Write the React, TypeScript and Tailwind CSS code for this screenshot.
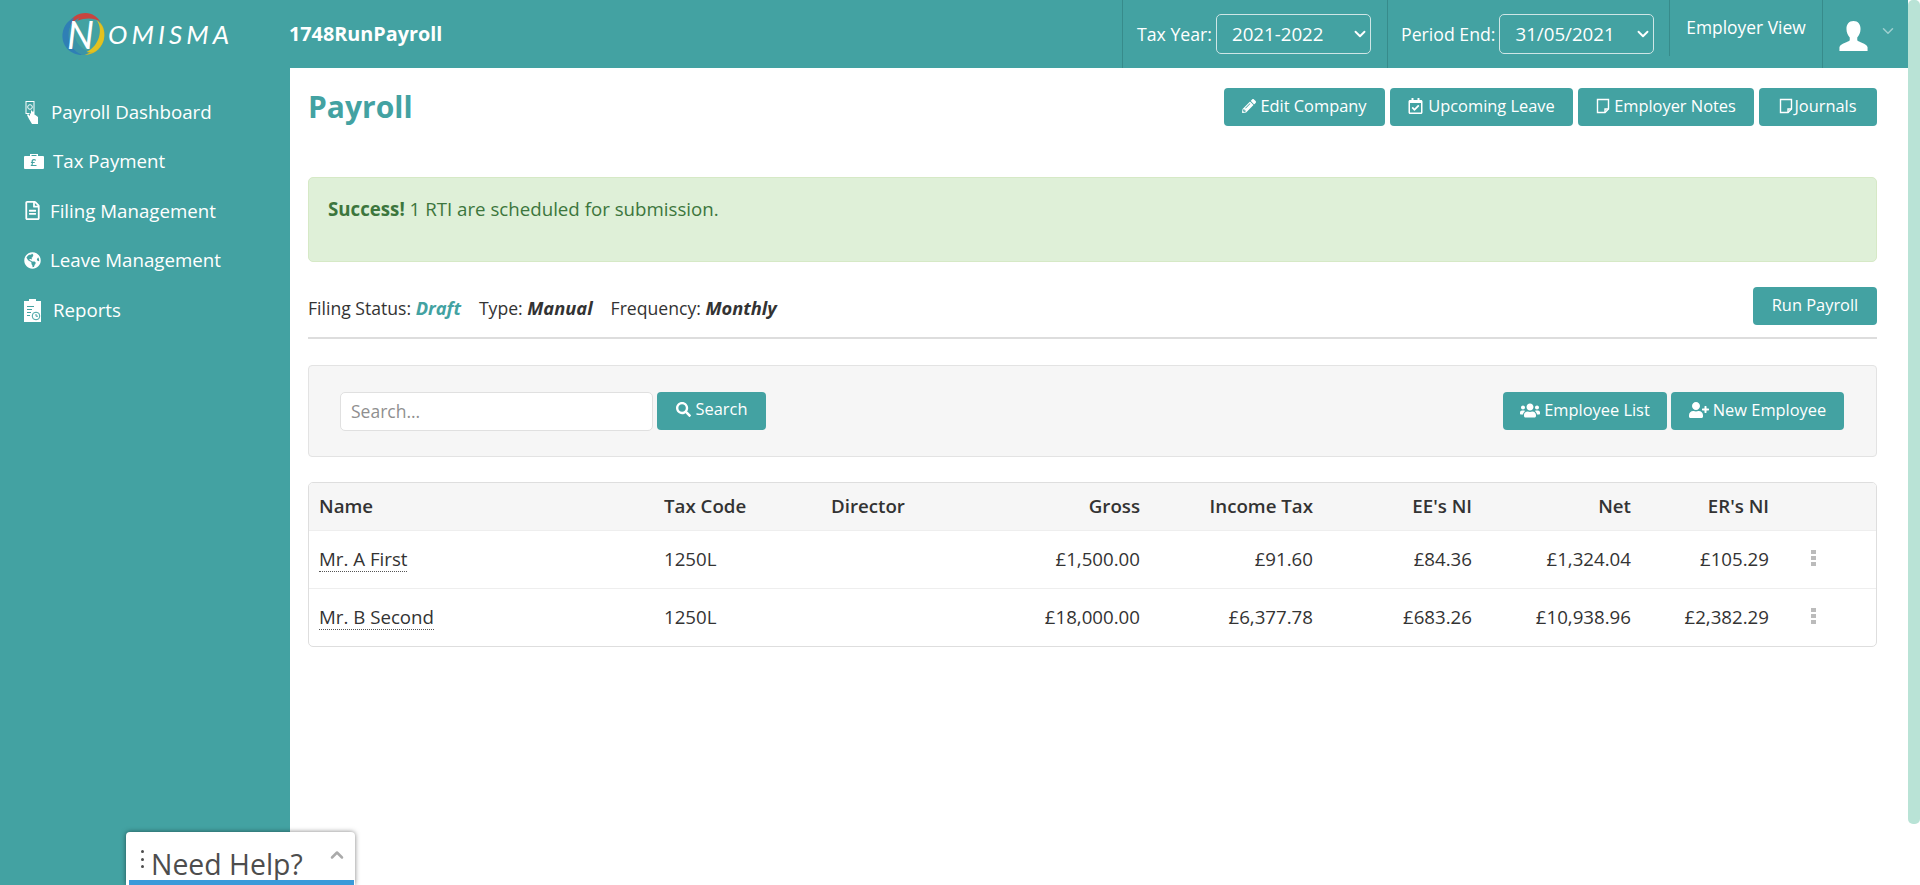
import { FaGlobeAmericas, FaPencilAlt, FaRegCalendarCheck, FaRegFileAlt, FaSearch, FaUserPlus, FaUsers } from "react-icons/fa";
import { FiChevronDown, FiChevronUp } from "react-icons/fi";

const btn = "flex h-[38px] items-center justify-center rounded-[4px] bg-[#43a2a2] pb-[2px] text-[16.4px] text-white";

const rows = [
  { name: "Mr. A First", code: "1250L", gross: "£1,500.00", tax: "£91.60", ee: "£84.36", net: "£1,324.04", er: "£105.29" },
  { name: "Mr. B Second", code: "1250L", gross: "£18,000.00", tax: "£6,377.78", ee: "£683.26", net: "£10,938.96", er: "£2,382.29" },
];

function Logo() {
  return (
    <div className="relative -ml-[1px] flex h-[46px] w-[172px] items-center">
      <svg viewBox="0 0 46 46" className="h-[46px] w-[47px] shrink-0" fill="none" aria-hidden="true">
        <path d="M6 17C9 6 18 2 25 2c7 0 12 4 15 9-6-5-22-6-34 6z" fill="#c8453f" />
        <path d="M22 44C9 44 1 34 2 23 3 14 9 8 14 7 7 14 6 34 22 44z" fill="#2f7fb5" />
        <path d="M22 44c-9-3-14-12-14-20C8 15 13 9 19 7 10 16 12 36 30 41c-2 2-5 3-8 3z" fill="#3a93a8" />
        <path d="M39 11c5 5 6 12 4 19-3 9-11 14-19 14 11-3 20-18 15-33z" fill="#d8b824" />
        <path d="M36 9c7 9 3 26-10 32 3 1 7 0 9-1 7-5 10-13 8-20-1-5-4-9-7-11z" fill="#e3c21f" />
      </svg>
      <span className="absolute left-[7px] top-[2px] font-['Lato',sans-serif] text-[38px] italic leading-[42px] text-white">N</span>
      <span className="ml-[1px] font-['Lato',sans-serif] text-[26px] italic leading-none tracking-[4.1px] text-white">OMISMA</span>
    </div>
  );
}

function HandIcon() {
  return (
    <svg viewBox="0 0 16 24" className="h-[24px] w-[16px]" aria-hidden="true">
      <path d="M1.500 1h9v13h-1V2h-7v11h3v1h-4z" fill="#fff" />
      <circle cx="6" cy="7" r="2.300" fill="none" stroke="#fff" strokeWidth="1" />
      <path d="M6 9v4l1 1V10l2 2 1-1v3l4 3v7H8l-3-5-2-4 1-1 2 2z" fill="#fff" />
    </svg>
  );
}

function BriefcaseIcon() {
  return (
    <svg viewBox="0 0 20 16" className="h-[16px] w-[20px]" aria-hidden="true">
      <path d="M6 3V1h8v2h5a1 1 0 0 1 1 1v11a1 1 0 0 1-1 1H1a1 1 0 0 1-1-1V4a1 1 0 0 1 1-1zm1.500 0h5V2h-5z" fill="#fff" fillRule="evenodd" />
      <path d="M12.500 13H6.800v-.9c1-.4 1.200-1.100 1-2.100H6.900v-.9h.7c-.3-1.900.8-3 2.300-3 .9 0 1.700.3 2.200.8l-.6.900c-.4-.4-.9-.6-1.500-.6-.9 0-1.300.7-1.100 1.900h1.800V10H8.900c.1.800 0 1.400-.4 1.900h4z" fill="#43a2a2" />
    </svg>
  );
}

function ReportIcon() {
  return (
    <svg viewBox="0 0 18 24" className="h-[24px] w-[18px]" aria-hidden="true">
      <path d="M0 3h5V1h7v2h5v21H0z" fill="#fff" />
      <path d="M3 8h7v1H3zM3 11h5v1H3zM3 14h4v1H3zM3 17h3v1H3z" fill="#43a2a2" />
      <circle cx="12" cy="18" r="3.800" fill="#fff" stroke="#43a2a2" strokeWidth="1" />
      <path d="M12 16v2.200h2" fill="none" stroke="#43a2a2" strokeWidth="1" />
    </svg>
  );
}

function NoteIcon() {
  return (
    <svg viewBox="0 0 14 16" className="h-[16px] w-[14px]" fill="none" aria-hidden="true">
      <path d="M1.500 1.500h11v9.500l-3.500 3.500H1.500z" stroke="#fff" strokeWidth="1.400" />
      <path d="M12.500 11H9v3.500" stroke="#fff" strokeWidth="1.400" />
    </svg>
  );
}

function UserIcon() {
  return (
    <svg viewBox="0 0 30 32" className="h-[30px] w-[29px]" aria-hidden="true">
      <path d="M15 0c5 0 7.500 3.500 7.500 8.500 0 3.500-1.500 7-3.500 9v3c1 2 10 3 11 7.500V32H0v-4c1-4.500 10-5.500 11-7.500v-3c-2-2-3.500-5.500-3.500-9C7.500 3.500 10 0 15 0z" fill="#fff" />
    </svg>
  );
}

function SelectBox({ value }: { value: string }) {
  return (
    <div className="flex h-[40px] w-[155px] items-center justify-between rounded-[5px] border border-[#cfe6e6] pl-[15px] pr-[1px] text-[18.7px] text-white">
      <span>{value}</span>
      <FiChevronDown className="h-[18px] w-[18px] stroke-[2.5]" />
    </div>
  );
}

function NavItem({ icon, label, slot, gap }: { icon: React.ReactNode; label: string; slot: string; gap: string }) {
  return (
    <li className={`flex h-[49.5px] items-center pl-[24px] text-[18.7px] text-white ${gap}`}>
      <span className={`flex items-center justify-center ${slot}`}>{icon}</span>
      {label}
    </li>
  );
}

export default function App() {
  return (
    <div className="flex h-[885px] overflow-hidden bg-white font-['Open_Sans',sans-serif] text-[#333]">
      <div className="flex min-w-0 flex-1 flex-col">
        <header className="flex h-[68px] shrink-0 items-center bg-[#43a2a2] text-white">
          <div className="flex w-[289px] shrink-0 justify-start pl-[61px]">
            <Logo />
          </div>
          <div className="flex-1 text-[19.8px] font-bold">1748RunPayroll</div>
          <div className="flex h-full w-[265px] items-center border-l border-[#378b8b] pl-[14px] text-[17.7px]">
            <span className="mr-[4px] shrink-0">Tax Year:</span>
            <SelectBox value="2021-2022" />
          </div>
          <div className="flex h-full w-[282px] items-center border-l border-[#378b8b] pl-[13px] text-[17.7px]">
            <span className="mr-[4px] shrink-0">Period End:</span>
            <SelectBox value="31/05/2021" />
          </div>
          <div className="flex h-[56px] w-[153px] justify-center self-start border-l border-[#378b8b] pt-[14px] text-[17.4px]">
            Employer View
          </div>
          <div className="flex h-full w-[86px] items-center border-l border-[#378b8b] pl-[16px] pt-[3px]">
            <UserIcon />
            <FiChevronDown className="mb-[9px] ml-[11px] h-[18px] w-[18px] text-[#9fd0d0]" />
          </div>
        </header>

        <div className="flex min-h-0 flex-1">
          <nav className="w-[290px] shrink-0 bg-[#43a2a2] pt-[19px]">
            <ul>
              <NavItem icon={<HandIcon />} label="Payroll Dashboard" slot="w-[16px]" gap="gap-[11px]" />
              <NavItem icon={<BriefcaseIcon />} label="Tax Payment" slot="w-[20px]" gap="gap-[9px]" />
              <NavItem icon={<FaRegFileAlt className="h-[19px] w-[17px]" />} label="Filing Management" slot="w-[17px]" gap="gap-[9px]" />
              <NavItem icon={<FaGlobeAmericas className="h-[17px] w-[17px]" />} label="Leave Management" slot="w-[17px]" gap="gap-[9px]" />
              <NavItem icon={<ReportIcon />} label="Reports" slot="w-[18px]" gap="gap-[11px]" />
            </ul>
          </nav>

          <main className="min-w-0 flex-1 pl-[18px] pr-[31px] pt-[20px]">
            <div className="flex h-[38px] items-center justify-between">
              <h1 className="text-[30px] font-bold leading-none text-[#43a2a2]">Payroll</h1>
              <div className="flex gap-[5px]">
                <button className={`${btn} w-[161px] gap-[4px]`}><FaPencilAlt className="h-[14px] w-[14px]" />Edit Company</button>
                <button className={`${btn} w-[183px] gap-[5px]`}><FaRegCalendarCheck className="h-[16px] w-[15px]" />Upcoming Leave</button>
                <button className={`${btn} w-[176px] gap-[4px]`}><NoteIcon />Employer Notes</button>
                <button className={`${btn} w-[118px] gap-[1px]`}><NoteIcon />Journals</button>
              </div>
            </div>

            <div className="mt-[51px] h-[85px] rounded-[5px] border border-[#d6e9c6] bg-[#dff0d8] pl-[19px] pt-[19px] text-[18.7px] leading-[24px] text-[#3c763d]">
              <strong>Success!</strong> 1 RTI are scheduled for submission.
            </div>

            <div className="mt-[25px] flex h-[52px] items-start justify-between border-b-2 border-[#ddd]">
              <div className="flex pt-[9px] text-[17.6px] leading-[24px]">
                <span>Filing Status: <b className="text-[18.3px] italic text-[#43a2a2]">Draft</b></span>
                <span className="ml-[18px]">Type: <b className="text-[18.3px] italic">Manual</b></span>
                <span className="ml-[18px]">Frequency: <b className="text-[18.3px] italic">Monthly</b></span>
              </div>
              <button className={`${btn} w-[124px]`}>Run Payroll</button>
            </div>

            <div className="mt-[26px] flex h-[92px] items-center justify-between rounded-[4px] border border-[#e3e3e3] bg-[#f6f6f6] pl-[31px] pr-[32px]">
              <div className="flex gap-[4px]">
                <input
                  placeholder="Search..."
                  readOnly
                  className="h-[39px] w-[313px] rounded-[5px] border border-[#e0e0e0] bg-white px-[10px] text-[17.5px] outline-none placeholder:text-[#8f8f8f]"
                />
                <button className={`${btn} w-[109px] gap-[5px]`}><FaSearch className="h-[15px] w-[15px]" />Search</button>
              </div>
              <div className="flex gap-[4px]">
                <button className={`${btn} w-[164px] gap-[4px]`}><FaUsers className="h-[21px] w-[20px]" />Employee List</button>
                <button className={`${btn} w-[173px] gap-[4px]`}><FaUserPlus className="h-[18px] w-[20px]" />New Employee</button>
              </div>
            </div>

            <div className="mt-[25px] overflow-hidden rounded-[5px] border border-[#dedede]">
              <table className="w-full table-fixed border-collapse text-[18.7px]">
                <colgroup>
                  <col className="w-[344px]" />
                  <col className="w-[167px]" />
                  <col className="w-[150px]" />
                  <col className="w-[181px]" />
                  <col className="w-[173px]" />
                  <col className="w-[159px]" />
                  <col className="w-[159px]" />
                  <col className="w-[138px]" />
                  <col />
                </colgroup>
                <thead>
                  <tr className="h-[47px] bg-[#f6f6f6] font-semibold">
                    <th className="pl-[10px] text-left font-semibold">Name</th>
                    <th className="px-[11px] text-left font-semibold">Tax Code</th>
                    <th className="px-[11px] text-left font-semibold">Director</th>
                    <th className="px-[11px] text-right font-semibold">Gross</th>
                    <th className="px-[11px] text-right font-semibold">Income Tax</th>
                    <th className="px-[11px] text-right font-semibold">EE's NI</th>
                    <th className="px-[11px] text-right font-semibold">Net</th>
                    <th className="px-[11px] text-right font-semibold">ER's NI</th>
                    <th />
                  </tr>
                </thead>
                <tbody>
                  {rows.map((row) => (
                    <tr key={row.name} className="h-[58px] border-t border-[#eee]">
                      <td className="pl-[10px]">
                        <span className="border-b border-dotted border-[#555]">{row.name}</span>
                      </td>
                      <td className="px-[11px]">{row.code}</td>
                      <td />
                      <td className="px-[11px] text-right">{row.gross}</td>
                      <td className="px-[11px] text-right">{row.tax}</td>
                      <td className="px-[11px] text-right">{row.ee}</td>
                      <td className="px-[11px] text-right">{row.net}</td>
                      <td className="px-[11px] text-right">{row.er}</td>
                      <td className="pl-[31px]">
                        <div className="flex w-[5px] flex-col gap-[2px] pb-[2px]">
                          <span className="h-[4px] bg-[#bbb]" />
                          <span className="h-[4px] bg-[#bbb]" />
                          <span className="h-[4px] bg-[#bbb]" />
                        </div>
                      </td>
                    </tr>
                  ))}
                </tbody>
              </table>
            </div>
          </main>
        </div>
      </div>

      <div className="w-[12px] shrink-0 bg-white">
        <div className="h-[824px] w-full rounded-[5px] bg-[#b9e3d6]" />
      </div>

      <div className="absolute left-[126px] top-[832px] flex h-[53px] w-[229px] items-start rounded-t-[4px] bg-white pl-[15px] pt-[14px] shadow-[0_0_5px_rgba(0,0,0,0.5)]">
        <span className="flex h-[22px] flex-col justify-between pr-[2px] pt-[4px]">
          <span className="h-[3px] w-[3px] rounded-full bg-[#4d4d4d]" />
          <span className="h-[3px] w-[3px] rounded-full bg-[#4d4d4d]" />
          <span className="h-[3px] w-[3px] rounded-full bg-[#4d4d4d]" />
        </span>
        <span className="pl-[5px] text-[28.4px] leading-[36px] text-[#4d4d4d]">Need Help?</span>
        <FiChevronUp className="absolute right-[8px] top-[13px] h-[20px] w-[20px] stroke-[3] text-[#aaa]" />
        <span className="absolute bottom-0 left-[3px] right-[1px] h-[5px] bg-[#3a9ad9]" />
      </div>
    </div>
  );
}
